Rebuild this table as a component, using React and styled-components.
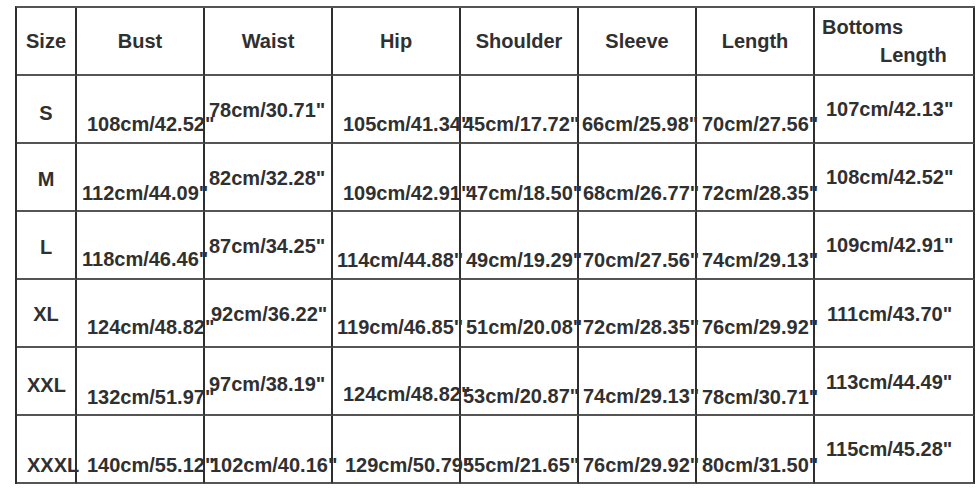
import React from 'react'
import styled, { createGlobalStyle } from "styled-components";

const GlobalStyle = createGlobalStyle`
  html, body {
    margin: 0;
    padding: 0;
    background: #fff;
  }
  body {
    width: 980px;
    height: 490px;
    overflow: hidden;
    font-family: "Liberation Sans", Arial, sans-serif;
  }
`

// widths between the grid lines, measured from the chart
const colWidths = [60, 128, 128, 128, 118, 118, 118, 160]

const headers = ["Size", "Bust", "Waist", "Hip", "Shoulder", "Sleeve", "Length"]

// each cell: [text, padding-left, padding-top]
const HI = 23
const LO = 37
const rows = [
  ["S", [["108cm/42.52\"", 10, LO], ["78cm/30.71\"", 4, HI], ["105cm/41.34\"", 10, LO], ["45cm/17.72\"", 2, LO], ["66cm/25.98\"", 3, LO], ["70cm/27.56\"", 5, LO], ["107cm/42.13\"", 11, 22]], 26],
  ["M", [["112cm/44.09\"", 5, 38], ["82cm/32.28\"", 4, 23], ["109cm/42.91\"", 10, 38], ["47cm/18.50\"", 5, 38], ["68cm/26.77\"", 4, 38], ["72cm/28.35\"", 5, 38], ["108cm/42.52\"", 11, 22]], 24],
  ["L", [["118cm/46.46\"", 5, 36], ["87cm/34.25\"", 4, 23], ["114cm/44.88\"", 4, 37], ["49cm/19.29\"", 5, 37], ["70cm/27.56\"", 4, 37], ["74cm/29.13\"", 5, 37], ["109cm/42.91\"", 11, 22]], 24],
  ["XL", [["124cm/48.82\"", 10, 36], ["92cm/36.22\"", 6, 23], ["119cm/46.85\"", 4, 36], ["51cm/20.08\"", 5, 36], ["72cm/28.35\"", 4, 36], ["76cm/29.92\"", 5, 36], ["111cm/43.70\"", 12, 23]], 23],
  ["XXL", [["132cm/51.97\"", 10, 38], ["97cm/38.19\"", 4, 25], ["124cm/48.82\"", 10, 35], ["53cm/20.87\"", 2, 37], ["74cm/29.13\"", 4, 37], ["78cm/30.71\"", 5, 38], ["113cm/44.49\"", 11, 23]], 26],
  ["XXXL", [["140cm/55.12\"", 10, 38], ["102cm/40.16\"", 5, 38], ["129cm/50.79\"", 12, 38], ["55cm/21.65\"", 2, 38], ["76cm/29.92\"", 4, 38], ["80cm/31.50\"", 5, 38], ["115cm/45.28\"", 11, 22]], 38],
]

const App = () => {
  return (
    <>
      <GlobalStyle />
      <Page>
        <Chart>
          {headers.map((h) => (
            <HeadCell key={h}>{h}</HeadCell>
          ))}
          <TwoLineHead>
            <HeadLine $indent={7}>Bottoms</HeadLine>
            <HeadLine $indent={65}>Length</HeadLine>
          </TwoLineHead>

          {rows.map(([size, cells, sizeTop]) => (
            <React.Fragment key={size}>
              <SizeCell $top={sizeTop}>{size}</SizeCell>
              {cells.map(([text, left, top], i) => (
                <ValueCell key={i} $left={left} $top={top}>
                  {text}
                </ValueCell>
              ))}
            </React.Fragment>
          ))}
        </Chart>
      </Page>
    </>
  )
}
export default App

const Page = styled.div`
  padding: 6px 0 0 15px;
`
const Chart = styled.div`
  display: grid;
  grid-template-columns: ${colWidths.map((w) => w + "px").join(" ")};
  grid-auto-rows: 68px;
  width: max-content;
  border-left: 2px solid #2e2e2e;
  border-top: 2px solid #555;
  color: #303030;
  font-weight: bold;
  font-size: 20px;
  line-height: 23px;
`
const Cell = styled.div`
  box-sizing: border-box;
  border-right: 2px solid #2e2e2e;
  border-bottom: 2px solid #555;
  white-space: nowrap;
  overflow: visible;
  min-width: 0;
`
const HeadCell = styled(Cell)`
  display: flex;
  align-items: center;
  justify-content: center;
`
const TwoLineHead = styled(Cell)`
  padding-top: 5px;
  line-height: 28px;
`
const HeadLine = styled.div`
  padding-left: ${(p) => p.$indent}px;
`
const SizeCell = styled(Cell)`
  padding: ${(p) => p.$top}px 10px 0;
  text-align: center;
`
const ValueCell = styled(Cell)`
  padding: ${(p) => p.$top}px 0 0 ${(p) => p.$left}px;
`
